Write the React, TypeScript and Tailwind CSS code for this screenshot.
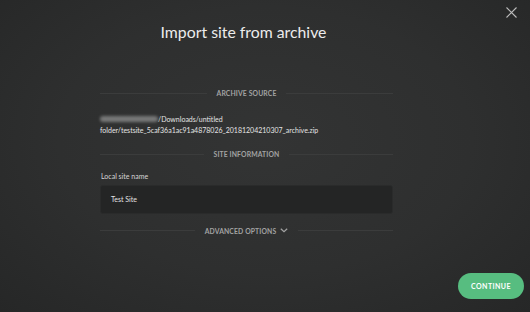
import React from "react";

function Divider({ label, children }: { label: string; children?: React.ReactNode }) {
  return (
    <div className="flex items-center gap-[10px]">
      <div className="h-px flex-1 bg-[#3b3c3c]" />
      <div className="flex items-center gap-[4px] text-[6.8px] font-bold tracking-[0.02em] text-[#a3a3a3] leading-none">
        {label}
        {children}
      </div>
      <div className="h-px flex-1 bg-[#3b3c3c]" />
    </div>
  );
}

export default function App() {
  return (
    <div
      className="relative w-[530px] h-[312px] overflow-hidden text-white"
      style={{
        fontFamily: "Lato, 'Open Sans', sans-serif",
        background:
          "radial-gradient(ellipse at 50% 45%, #333434 0%, #2e2f2f 55%, #262727 100%)",
      }}
    >
      <button className="absolute right-[13px] top-[7px] text-[#bdbdbd]">
        <svg width="11" height="11" viewBox="0 0 11 11" fill="none" stroke="currentColor" strokeWidth="1.1">
          <path d="M0.5 0.5 L10.5 10.5 M10.5 0.5 L0.5 10.5" />
        </svg>
      </button>

      <div className="flex flex-col pl-[100px] w-[393px]">
        <h1 className="pt-[22px] pr-[6px] text-center text-[15.8px] leading-[20px] font-normal text-[#ececec]">
          Import site from archive
        </h1>

        <div className="mt-[48px]">
          <Divider label="ARCHIVE SOURCE" />
        </div>

        <div className="mt-[17px] text-[7px] leading-[11px] text-[#e4e4e4]">
          <div className="flex items-center">
            <span className="inline-block w-[58px] h-[6px] rounded-sm bg-[#777878] blur-[1.5px]" />
            <span>/Downloads/untitled</span>
          </div>
          <div>folder/testsite_5caf36a1ac91a4878026_20181204210307_archive.zip</div>
        </div>

        <div className="mt-[15px]">
          <Divider label="SITE INFORMATION" />
        </div>

        <div className="mt-[13px] text-[7px] leading-[10px] text-[#d6d6d6] pl-px">Local site name</div>

        <div className="mt-[4px] h-[29px] rounded-[3px] bg-[#242525] border border-[#2a2b2b] flex items-center pl-[10px] text-[7px] text-[#e2e2e2]">
          Test Site
        </div>

        <div className="mt-[14px]">
          <Divider label="ADVANCED OPTIONS">
            <svg width="8" height="5" viewBox="0 0 8 5" fill="none" stroke="#a3a3a3" strokeWidth="1.2">
              <path d="M0.8 0.8 L4 3.8 L7.2 0.8" />
            </svg>
          </Divider>
        </div>
      </div>

      <button className="absolute left-[458px] top-[273px] w-[66px] h-[26px] rounded-full bg-[#57bd80] text-white text-[7px] font-bold tracking-[0.06em] flex items-center justify-center">
        CONTINUE
      </button>
    </div>
  );
}
